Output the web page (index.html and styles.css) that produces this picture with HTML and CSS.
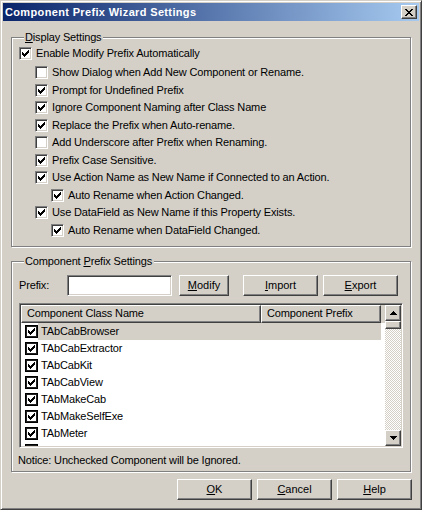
FILE: index.html
```html
<!DOCTYPE html>
<html lang="en">
<head>
<meta charset="utf-8">
<title>Component Prefix Wizard Settings</title>
<link rel="stylesheet" href="styles.css">
</head>
<body>
<svg class="defs" width="0" height="0" aria-hidden="true">
  <defs>
    <symbol id="chk" viewBox="0 0 7 7"><path d="M0 2h1v3H0z M1 3h1v3H1z M2 4h1v3H2z M3 3h1v3H3z M4 2h1v3H4z M5 1h1v3H5z M6 0h1v3H6z"/></symbol>
    <symbol id="xg" viewBox="0 0 8 7"><path d="M0 0h2v1H0z M6 0h2v1H6z M1 1h2v1H1z M5 1h2v1H5z M2 2h4v1H2z M3 3h2v1H3z M2 4h4v1H2z M1 5h2v1H1z M5 5h2v1H5z M0 6h2v1H0z M6 6h2v1H6z"/></symbol>
    <symbol id="up" viewBox="0 0 7 4"><path d="M3 0h1v1H3z M2 1h3v1H2z M1 2h5v1H1z M0 3h7v1H0z"/></symbol>
    <symbol id="down" viewBox="0 0 7 4"><path d="M0 0h7v1H0z M1 1h5v1H1z M2 2h3v1H2z M3 3h1v1H3z"/></symbol>
  </defs>
</svg>
<div class="window">
  <div class="titlebar">
    <span class="title">Component Prefix Wizard Settings</span>
    <button class="close" type="button"><svg class="xg" width="8" height="7"><use href="#xg"/></svg></button>
  </div>
  <div class="client">
    <fieldset class="group group-display">
      <legend><u>D</u>isplay Settings</legend>
      <div class="opt first"><span class="cb"><svg width="7" height="7"><use href="#chk"/></svg></span><span>Enable Modify Prefix Automatically</span></div>
      <div class="opt l1 second"><span class="cb"></span><span>Show Dialog when Add New Component or Rename.</span></div>
      <div class="opt l1 tall"><span class="cb"><svg width="7" height="7"><use href="#chk"/></svg></span><span>Prompt for Undefined Prefix</span></div>
      <div class="opt l1"><span class="cb"><svg width="7" height="7"><use href="#chk"/></svg></span><span>Ignore Component Naming after Class Name</span></div>
      <div class="opt l1 tall"><span class="cb"><svg width="7" height="7"><use href="#chk"/></svg></span><span>Replace the Prefix when Auto-rename.</span></div>
      <div class="opt l1"><span class="cb"></span><span>Add Underscore after Prefix when Renaming.</span></div>
      <div class="opt l1 tall"><span class="cb"><svg width="7" height="7"><use href="#chk"/></svg></span><span>Prefix Case Sensitive.</span></div>
      <div class="opt l1"><span class="cb"><svg width="7" height="7"><use href="#chk"/></svg></span><span>Use Action Name as New Name if Connected to an Action.</span></div>
      <div class="opt l2 tall"><span class="cb"><svg width="7" height="7"><use href="#chk"/></svg></span><span>Auto Rename when Action Changed.</span></div>
      <div class="opt l1"><span class="cb"><svg width="7" height="7"><use href="#chk"/></svg></span><span>Use DataField as New Name if this Property Exists.</span></div>
      <div class="opt l2 tall"><span class="cb"><svg width="7" height="7"><use href="#chk"/></svg></span><span>Auto Rename when DataField Changed.</span></div>
    </fieldset>

    <fieldset class="group group-prefix">
      <legend>Component <u>P</u>refix Settings</legend>
      <div class="prefix-row">
        <label class="prefix-label" for="prefix">Prefix:</label>
        <input id="prefix" class="field" type="text">
        <button class="btn btn-modify" type="button"><u>M</u>odify</button>
        <button class="btn btn-import" type="button"><u>I</u>mport</button>
        <button class="btn btn-export" type="button"><u>E</u>xport</button>
      </div>
      <div class="listview">
        <div class="lv-main">
          <div class="lv-header">
            <div class="hcol c1">Component Class Name</div>
            <div class="hcol c2">Component Prefix</div>
          </div>
          <div class="lv-rows">
            <div class="lv-row"><span class="lcb"><svg width="7" height="7"><use href="#chk"/></svg></span><span class="name sel">TAbCabBrowser</span></div>
            <div class="lv-row"><span class="lcb"><svg width="7" height="7"><use href="#chk"/></svg></span><span class="name">TAbCabExtractor</span></div>
            <div class="lv-row"><span class="lcb"><svg width="7" height="7"><use href="#chk"/></svg></span><span class="name">TAbCabKit</span></div>
            <div class="lv-row"><span class="lcb"><svg width="7" height="7"><use href="#chk"/></svg></span><span class="name">TAbCabView</span></div>
            <div class="lv-row"><span class="lcb"><svg width="7" height="7"><use href="#chk"/></svg></span><span class="name">TAbMakeCab</span></div>
            <div class="lv-row"><span class="lcb"><svg width="7" height="7"><use href="#chk"/></svg></span><span class="name">TAbMakeSelfExe</span></div>
            <div class="lv-row"><span class="lcb"><svg width="7" height="7"><use href="#chk"/></svg></span><span class="name">TAbMeter</span></div>
            <div class="lv-row"><span class="lcb"><svg width="7" height="7"><use href="#chk"/></svg></span><span class="name"></span></div>
          </div>
        </div>
        <div class="vscroll">
          <div class="sbtn"><svg width="7" height="4"><use href="#up"/></svg></div>
          <div class="thumb"></div>
          <div class="track"></div>
          <div class="sbtn"><svg width="7" height="4"><use href="#down"/></svg></div>
        </div>
      </div>
      <div class="notice">Notice: Unchecked Component will be Ignored.</div>
    </fieldset>

    <div class="dialog-buttons">
      <button class="btn btn-dlg" type="button"><u>O</u>K</button>
      <button class="btn btn-dlg" type="button"><u>C</u>ancel</button>
      <button class="btn btn-dlg" type="button"><u>H</u>elp</button>
    </div>
  </div>
</div>
</body>
</html>
```

FILE: styles.css
```css
html, body {
  margin: 0;
  padding: 0;
  background: #d4d0c8;
}

body {
  font-family: "Liberation Sans", Arial, sans-serif;
  font-size: 11px;
  line-height: 13px;
  letter-spacing: -0.15px;
  color: #000;
}

.defs {
  display: block;
  width: 0;
  height: 0;
  overflow: hidden;
}

svg {
  display: block;
  fill: currentColor;
}

u {
  text-decoration: underline;
  text-underline-offset: 1px;
}

.window {
  width: 422px;
  height: 510px;
  box-sizing: border-box;
  border: 1px solid;
  border-color: #d4d0c8 #404040 #404040 #d4d0c8;
  box-shadow: inset 1px 1px 0 #fff, inset -1px -1px 0 #808080;
  padding: 2px;
  background: #d4d0c8;
  display: flex;
  flex-direction: column;
}

/* ---------- title bar ---------- */
.titlebar {
  height: 18px;
  flex: none;
  display: flex;
  align-items: center;
  justify-content: space-between;
  padding: 0 2px 0 2px;
  background: linear-gradient(to right, #0a246a, #a6caf0);
}

.title {
  color: #fff;
  font-weight: bold;
  font-size: 11px;
  letter-spacing: 0.35px;
  line-height: 18px;
  white-space: nowrap;
}

.close {
  width: 16px;
  height: 14px;
  box-sizing: border-box;
  padding: 0;
  border: 1px solid;
  border-color: #fff #404040 #404040 #fff;
  box-shadow: inset -1px -1px 0 #808080;
  background: #d4d0c8;
  display: flex;
  align-items: center;
  justify-content: center;
  color: #000;
}

/* ---------- client ---------- */
.client {
  flex: 1;
  display: flex;
  flex-direction: column;
  padding: 9px 8px 0 8px;
}

.group {
  margin: 0;
  padding: 0 0 7px 7px;
  border: 1px solid #808080;
  box-shadow: inset 1px 1px 0 #fff, 1px 1px 0 #fff;
  min-width: 0;
}

.group legend {
  margin-left: 5px;
  padding: 0 2px 0 1px;
  line-height: 14px;
  background: #d4d0c8;
}

.group-prefix {
  margin-top: 7px;
  padding: 0 7px 4px 7px;
}

/* ---------- option checkboxes ---------- */
.opt {
  display: flex;
  align-items: center;
  gap: 4px;
  height: 17px;
  white-space: nowrap;
}

.opt.first {
  margin-top: 1px;
}

.opt.second {
  margin-top: 2px;
}

.opt.tall {
  height: 18px;
}

.opt.l1 {
  margin-left: 16px;
}

.opt.l2 {
  margin-left: 32px;
}

.cb {
  width: 13px;
  height: 13px;
  flex: none;
  box-sizing: border-box;
  border: 1px solid;
  border-color: #808080 #fff #fff #808080;
  box-shadow: inset 1px 1px 0 #404040, inset -1px -1px 0 #d4d0c8;
  background: #fff;
  display: flex;
  align-items: center;
  justify-content: center;
}

/* ---------- prefix row ---------- */
.prefix-row {
  display: flex;
  align-items: center;
  height: 21px;
  margin-top: 7px;
}

.prefix-label {
  width: 48px;
  flex: none;
}

.field {
  width: 105px;
  height: 21px;
  box-sizing: border-box;
  margin: 0;
  padding: 0 3px;
  border: 1px solid;
  border-color: #808080 #fff #fff #808080;
  box-shadow: inset 1px 1px 0 #404040, inset -1px -1px 0 #d4d0c8;
  background: #fff;
  font: inherit;
  outline: none;
}

.btn {
  height: 21px;
  box-sizing: border-box;
  margin: 0;
  padding: 0;
  border: 1px solid;
  border-color: #fff #404040 #404040 #fff;
  box-shadow: inset -1px -1px 0 #808080;
  background: #d4d0c8;
  font: inherit;
  color: #000;
  flex: none;
}

.btn-modify {
  width: 50px;
  margin-left: 7px;
}

.btn-import {
  width: 75px;
  margin-left: 14px;
}

.btn-export {
  width: 75px;
  margin-left: 5px;
}

/* ---------- list view ---------- */
.listview {
  margin-top: 7px;
  width: 384px;
  height: 145px;
  box-sizing: border-box;
  border: 1px solid;
  border-color: #808080 #fff #fff #808080;
  box-shadow: inset 1px 1px 0 #404040, inset -1px -1px 0 #d4d0c8;
  padding: 1px;
  display: flex;
  background: #fff;
}

.lv-main {
  flex: 1;
  display: flex;
  flex-direction: column;
  overflow: hidden;
}

.lv-header {
  height: 18px;
  flex: none;
  display: flex;
  background: #d4d0c8;
}

.hcol {
  height: 18px;
  box-sizing: border-box;
  border: 1px solid;
  border-color: #fff #404040 #404040 #fff;
  box-shadow: inset -1px -1px 0 #808080;
  padding-left: 5px;
  line-height: 15px;
  white-space: nowrap;
}

.hcol.c1 {
  width: 240px;
}

.hcol.c2 {
  width: 120px;
}

.lv-rows {
  flex: 1;
  overflow: hidden;
}

.lv-row {
  width: 360px;
  height: 17px;
  box-sizing: border-box;
  padding-left: 4px;
  display: flex;
  align-items: center;
}

.lcb {
  width: 13px;
  height: 13px;
  flex: none;
  box-sizing: border-box;
  border: 1px solid #000;
  box-shadow: inset 0 0 0 1px #202020;
  background: #fff;
  display: flex;
  align-items: center;
  justify-content: center;
}

.name {
  flex: 1;
  height: 17px;
  line-height: 17px;
  padding-left: 3px;
  white-space: nowrap;
}

.name.sel {
  background: #d4d0c8;
}

/* ---------- scrollbar ---------- */
.vscroll {
  width: 16px;
  flex: none;
  display: flex;
  flex-direction: column;
}

.sbtn {
  height: 16px;
  flex: none;
  box-sizing: border-box;
  border: 1px solid;
  border-color: #fff #404040 #404040 #fff;
  box-shadow: inset -1px -1px 0 #808080;
  background: #d4d0c8;
  display: flex;
  align-items: center;
  justify-content: center;
}

.thumb {
  height: 8px;
  flex: none;
  box-sizing: border-box;
  border: 1px solid;
  border-color: #fff #404040 #404040 #fff;
  box-shadow: inset -1px -1px 0 #808080;
  background: #d4d0c8;
}

.track {
  flex: 1;
  background: repeating-conic-gradient(#fff 0 25%, #d4d0c8 0 50%) 0 0 / 2px 2px;
}

.notice {
  margin-top: 6px;
  margin-left: -1px;
  line-height: 13px;
}

/* ---------- dialog buttons ---------- */
.dialog-buttons {
  display: flex;
  justify-content: flex-end;
  gap: 5px;
  margin-top: 7px;
  margin-right: -1px;
}

.btn-dlg {
  width: 75px;
}
```
